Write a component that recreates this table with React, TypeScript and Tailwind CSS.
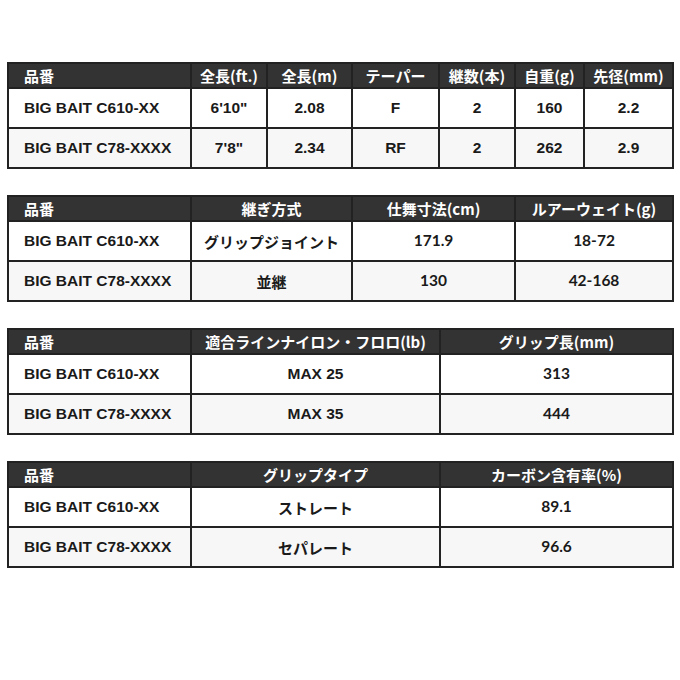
import React from "react";

type Cell = { t: string; f?: "arial" | "lato" | "jp" };
type TableDef = {
  cols: string;
  head: string[];
  rows: Cell[][];
};

const JP = "font-['Noto_Sans_CJK_JP',sans-serif]";
const AR = "font-['Liberation_Sans','Noto_Sans_CJK_JP',sans-serif]";
const LA = "font-['Lato','Noto_Sans_CJK_JP',sans-serif]";

const tables: TableDef[] = [
  {
    cols: "grid-cols-[183px_76px_85px_87px_76px_69px_87px]",
    head: ["品番", "全長(ft.)", "全長(m)", "テーパー", "継数(本)", "自重(g)", "先径(mm)"],
    rows: [
      [
        { t: "BIG BAIT C610-XX" },
        { t: "6'10\"" },
        { t: "2.08" },
        { t: "F" },
        { t: "2" },
        { t: "160" },
        { t: "2.2" },
      ],
      [
        { t: "BIG BAIT C78-XXXX" },
        { t: "7'8\"" },
        { t: "2.34" },
        { t: "RF" },
        { t: "2" },
        { t: "262" },
        { t: "2.9" },
      ],
    ],
  },
  {
    cols: "grid-cols-[183px_161px_163px_156px]",
    head: ["品番", "継ぎ方式", "仕舞寸法(cm)", "ルアーウェイト(g)"],
    rows: [
      [
        { t: "BIG BAIT C610-XX" },
        { t: "グリップジョイント", f: "jp" },
        { t: "171.9", f: "lato" },
        { t: "18-72", f: "lato" },
      ],
      [
        { t: "BIG BAIT C78-XXXX" },
        { t: "並継", f: "jp" },
        { t: "130", f: "lato" },
        { t: "42-168", f: "lato" },
      ],
    ],
  },
  {
    cols: "grid-cols-[183px_249px_231px]",
    head: ["品番", "適合ラインナイロン・フロロ(lb)", "グリップ長(mm)"],
    rows: [
      [{ t: "BIG BAIT C610-XX" }, { t: "MAX 25" }, { t: "313", f: "lato" }],
      [{ t: "BIG BAIT C78-XXXX" }, { t: "MAX 35" }, { t: "444", f: "lato" }],
    ],
  },
  {
    cols: "grid-cols-[183px_249px_231px]",
    head: ["品番", "グリップタイプ", "カーボン含有率(%)"],
    rows: [
      [{ t: "BIG BAIT C610-XX" }, { t: "ストレート", f: "jp" }, { t: "89.1", f: "lato" }],
      [{ t: "BIG BAIT C78-XXXX" }, { t: "セパレート", f: "jp" }, { t: "96.6", f: "lato" }],
    ],
  },
];

function fontClass(f?: string) {
  if (f === "jp") return `${JP} text-[15px]`;
  if (f === "lato") return `${LA} text-[15.5px]`;
  return `${AR} text-[15.5px]`;
}

function SpecTable({ def }: { def: TableDef }) {
  const n = def.head.length;
  return (
    <div className="w-[667px] border-2 border-[#222] bg-white">
      <div className={`grid ${def.cols} h-[25px] bg-[#333333] border-b-2 border-[#222]`}>
        {def.head.map((h, i) => (
          <div
            key={i}
            className={`flex items-center ${i === 0 ? "justify-start pl-[15px]" : "justify-center"} ${
              i < n - 1 ? "border-r-2 border-[#222]" : ""
            } ${JP} text-[15px] font-bold text-white leading-none`}
          >
            {h}
          </div>
        ))}
      </div>
      {def.rows.map((row, ri) => (
        <div
          key={ri}
          className={`grid ${def.cols} ${ri === 0 ? "h-[40px] bg-white border-b-2 border-[#222]" : "h-[38px] bg-[#f7f7f7]"}`}
        >
          {row.map((c, ci) => (
            <div
              key={ci}
              className={`flex items-center ${ci === 0 ? "justify-start pl-[15px]" : "justify-center"} ${
                ci < n - 1 ? "border-r-2 border-[#222]" : ""
              } ${fontClass(c.f)} font-bold text-[#1a1a1a] leading-none`}
            >
              {c.t}
            </div>
          ))}
        </div>
      ))}
    </div>
  );
}

export default function App() {
  return (
    <div className="w-[680px] h-[680px] bg-white pt-[62px] pl-[7px] flex flex-col gap-[26px]">
      {tables.map((t, i) => (
        <SpecTable key={i} def={t} />
      ))}
    </div>
  );
}
